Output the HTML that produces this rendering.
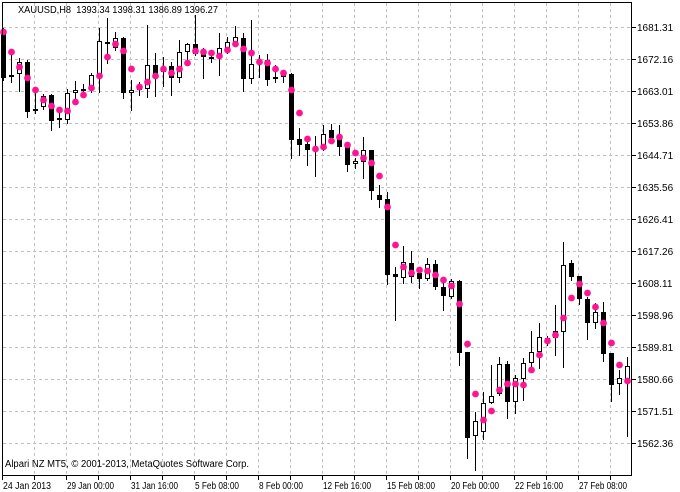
<!DOCTYPE html>
<html><head><meta charset="utf-8">
<style>
html,body{margin:0;padding:0;background:#fff;}
body{width:680px;height:492px;overflow:hidden;position:relative;font-family:"Liberation Sans",sans-serif;}
svg{position:absolute;left:0;top:0;}
text{font-family:"Liberation Sans",sans-serif;font-size:10px;fill:#000;}
</style></head><body>
<svg id="c" width="680" height="492" xmlns="http://www.w3.org/2000/svg">
<g id="grid" stroke="#c0c0c0" stroke-width="1" stroke-dasharray="3,3" shape-rendering="crispEdges"></g>
<g id="cand" shape-rendering="crispEdges"></g>
<g id="dots" fill="#ff1493"></g>
<rect x="2.5" y="2.5" width="629" height="473" fill="none" stroke="#000" stroke-width="1" shape-rendering="crispEdges"/>
<g id="axis" stroke="#000" shape-rendering="crispEdges"></g>
<text x="18" y="13" textLength="200" lengthAdjust="spacingAndGlyphs">XAUUSD,H8&#160;&#160;1393.34 1398.31 1386.89 1396.27</text>
<text x="5" y="467" textLength="244" lengthAdjust="spacingAndGlyphs">Alpari NZ MT5, © 2001-2013, MetaQuotes Software Corp.</text>
<g id="plab">
<text x="637" y="31">1681.31</text><text x="637" y="63">1672.16</text><text x="637" y="95">1663.01</text>
<text x="637" y="127">1653.86</text><text x="637" y="159">1644.71</text><text x="637" y="191">1635.56</text>
<text x="637" y="223">1626.41</text><text x="637" y="255">1617.26</text><text x="637" y="287">1608.11</text>
<text x="637" y="319">1598.96</text><text x="637" y="351">1589.81</text><text x="637" y="383">1580.66</text>
<text x="637" y="415">1571.51</text><text x="637" y="447">1562.36</text>
</g>
<g lengthAdjust="spacingAndGlyphs">
<text x="3" y="489" textLength="48" lengthAdjust="spacingAndGlyphs">24 Jan 2013</text>
<text x="67" y="489" textLength="47" lengthAdjust="spacingAndGlyphs">29 Jan 00:00</text>
<text x="131" y="489" textLength="47" lengthAdjust="spacingAndGlyphs">31 Jan 16:00</text>
<text x="195" y="489" textLength="44" lengthAdjust="spacingAndGlyphs">5 Feb 08:00</text>
<text x="259" y="489" textLength="44" lengthAdjust="spacingAndGlyphs">8 Feb 00:00</text>
<text x="323" y="489" textLength="48" lengthAdjust="spacingAndGlyphs">12 Feb 16:00</text>
<text x="387" y="489" textLength="48" lengthAdjust="spacingAndGlyphs">15 Feb 08:00</text>
<text x="451" y="489" textLength="48" lengthAdjust="spacingAndGlyphs">20 Feb 00:00</text>
<text x="515" y="489" textLength="48" lengthAdjust="spacingAndGlyphs">22 Feb 16:00</text>
<text x="579" y="489" textLength="48" lengthAdjust="spacingAndGlyphs">27 Feb 08:00</text>
</g>
</svg>
<script>
var NS="http://www.w3.org/2000/svg";
function el(p,t,a){var e=document.createElementNS(NS,t);for(var k in a)e.setAttribute(k,a[k]);document.getElementById(p).appendChild(e);}
for(var x=34;x<=610;x+=32){el("grid","line",{x1:x+.5,y1:3,x2:x+.5,y2:475});el("axis","line",{x1:x+.5,y1:476,x2:x+.5,y2:480});}
for(var y=27;y<=443;y+=32){el("grid","line",{x1:3,y1:y+.5,x2:631,y2:y+.5});el("axis","line",{x1:632,y1:y+.5,x2:636,y2:y+.5});}
el("axis","line",{x1:2.5,y1:476,x2:2.5,y2:480});
var d=[
['b',33,78,28,80,32],['b',75,75,53,82,52],['w',62,74,58,91,67],['b',62,112,60,117,78],['b',109,109,90,113,90],
['w',96,107,94,109,100],['b',95,121,94,130,106],['w',118,120,112,127,110],['w',93,120,89,123,111],['w',90,93,81,99,102],
['b',89,89,84,95,95],['w',75,90,73,92,88],['w',41,75,28,92,76],['b',42,42,18,63,57],['w',38,48,32,50,44],
['b',38,93,37,98,51],['w',90,93,80,110,69],['b',88,88,82,95,87],['w',65,89,25,97,82],['b',65,77,53,96,76],
['w',67,72,57,86,69],['b',66,78,62,95,73],['w',52,78,40,82,69],['w',44,52,43,65,63],['b',44,54,15,55,51],
['b',53,57,48,78,52],['w',57,59,53,62,53],['w',48,58,33,75,56],['w',42,52,37,53,50],['w',37,42,26,43,44],
['b',38,79,33,91,49],['w',64,79,20,83,53],['b',60,60,55,77,62],['b',60,80,54,85,63],['b',77,77,65,82,69],
['b',71,77,70,82,73],['b',74,140,73,158,90],['b',139,145,128,155,113],['b',144,150,142,165,139],['b',147,147,136,176,149],
['w',134,149,125,150,147],['b',130,138,124,143,141],['b',135,147,125,155,137],['b',147,165,147,171,145],['w',161,164,158,168,153],
['w',150,162,137,178,158],['b',150,191,150,199,163],['b',195,200,185,207,176],['b',199,275,192,284,207],['b',274,277,267,320,245],
['w',262,278,246,283,267],['b',263,277,251,282,273],['b',273,279,269,288,270],['w',264,279,258,280,271],['b',264,287,260,289,275],
['b',287,296,283,310,280],['w',281,297,279,298,286],['b',281,353,280,365,304],['b',352,438,352,458,344],['w',421,436,412,470,394],
['w',403,432,392,439,420],['w',396,403,365,403,411],['w',364,394,357,395,390],['b',364,402,361,418,384],['w',378,402,375,413,384],
['w',363,379,358,400,385],['w',352,363,331,368,370],['w',337,352,323,368,355],['w',338,343,336,345,341],['b',331,338,305,355,335],
['w',265,332,242,367,318],['b',263,277,260,280,298],['b',276,299,276,304,284],['b',299,323,297,339,293],['w',312,323,303,328,307],
['b',312,354,302,361,323],['b',353,385,353,401,343],['w',378,384,370,394,365],['w',366,383,357,436,381]
];
for(var i=0;i<d.length;i++){
 var c=d[i],cx=3+8*i;
 el("cand","line",{x1:cx+.5,y1:c[3],x2:cx+.5,y2:c[4]+1,stroke:"#000","stroke-width":1});
 var h=c[2]-c[1];
 if(c[0]=='b'){el("cand","rect",{x:cx-2,y:c[1],width:5,height:Math.max(h,2),fill:"#000"});}
 else{el("cand","rect",{x:cx-1.5,y:c[1]+.5,width:4,height:Math.max(h-1,1),fill:"#fff",stroke:"#000","stroke-width":1});}
 el("dots","circle",{cx:cx+.5,cy:c[5],r:3.4});
}
</script>
</body></html>
